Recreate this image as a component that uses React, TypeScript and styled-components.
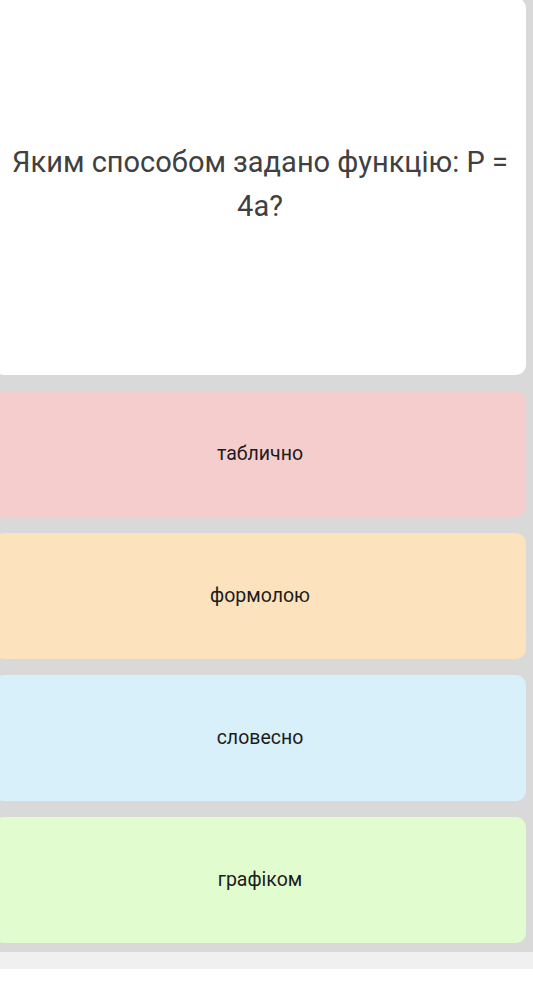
import styled, { createGlobalStyle } from "styled-components";

const GlobalStyle = createGlobalStyle`
  body {
    margin: 0;
    background: #ffffff;
    font-family: Roboto, "Liberation Sans", sans-serif;
    overflow: hidden;
  }
`;

const StyledBoard = styled.main`
  display: flex;
  flex-direction: column;
  gap: 16px;
  margin: -2px 0 0 -6px;
  padding: 0 7px 9px 0;
  background: #d9d9d9;
`;

const StyledQuestion = styled.section`
  display: flex;
  align-items: center;
  justify-content: center;
  height: 377px;
  padding: 0 14px 6px;
  box-sizing: border-box;
  background: #ffffff;
  border-radius: 10px;
`;

const StyledQuestionText = styled.h1`
  margin: 0;
  font-size: 29px;
  font-weight: 400;
  line-height: 44px;
  color: #404040;
  text-align: center;
`;

const StyledOption = styled.button<{ $tint: string }>`
  display: flex;
  align-items: center;
  justify-content: center;
  height: 126px;
  padding: 0 0 2px;
  border: none;
  border-radius: 10px;
  background: ${(p) => p.$tint};
  font-family: inherit;
  font-size: 19.5px;
  color: #1c1c1c;
`;

const StyledFooter = styled.div`
  height: 17px;
  background: #f0f0f0;
`;

const options = [
  { id: "table", label: "таблично", tint: "#f6cdcd" },
  { id: "formula", label: "формолою", tint: "#fce2bd" },
  { id: "words", label: "словесно", tint: "#d8f0fa" },
  { id: "graph", label: "графіком", tint: "#e1fdd0" },
];

function App() {
  return (
    <>
      <GlobalStyle />
      <StyledBoard>
        <StyledQuestion>
          <StyledQuestionText>Яким способом задано функцію: P = 4a?</StyledQuestionText>
        </StyledQuestion>
        {options.map((option) => (
          <StyledOption key={option.id} $tint={option.tint}>
            {option.label}
          </StyledOption>
        ))}
      </StyledBoard>
      <StyledFooter />
    </>
  );
}

export default App;
